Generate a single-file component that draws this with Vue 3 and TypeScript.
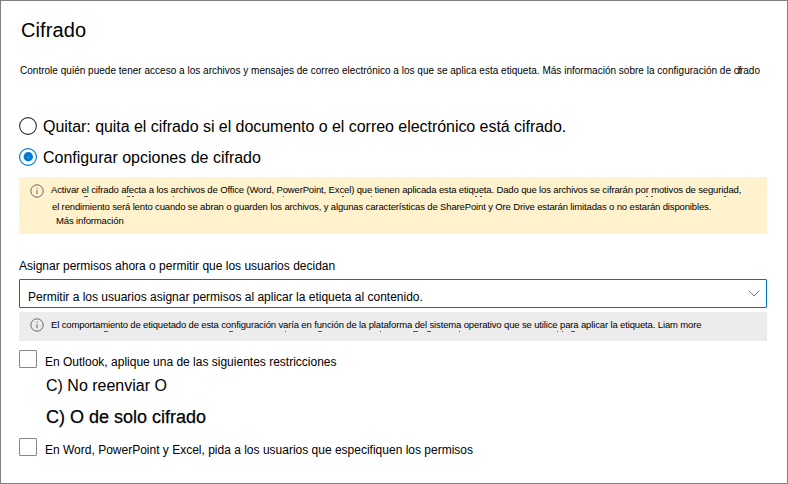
<script setup lang="ts">
import { ref } from 'vue'

const mode = ref<'remove' | 'configure'>('configure')
const outlook = ref(false)
const office = ref(false)
const modes: { id: 'remove' | 'configure'; label: string }[] = [
  { id: 'remove', label: 'Quitar: quita el cifrado si el documento o el correo electrónico está cifrado.' },
  { id: 'configure', label: 'Configurar opciones de cifrado' },
]
</script>

<template>
  <main class="panel">
    <h1 class="title">Cifrado</h1>
    <p class="intro">Controle quién puede tener acceso a los archivos y mensajes de correo electrónico a los que se aplica esta etiqueta. Más información sobre la configuración de <span class="tight">cif</span>rado</p>

    <div class="modes">
      <div v-for="m in modes" :key="m.id" class="mode" :class="m.id" @click="mode = m.id">
        <svg class="radio" viewBox="0 0 18 18">
          <circle cx="9" cy="9" r="8.4" fill="#fff" :stroke="mode === m.id ? '#0078d4' : '#333'" stroke-width="1.1" />
          <template v-if="mode === m.id">
            <circle cx="9.3" cy="8.8" r="4.7" fill="#0078d4" />
            <circle cx="9.5" cy="9.5" r=".7" fill="#8dc3ec" />
          </template>
        </svg>
        <span class="mode-label">{{ m.label }}</span>
      </div>
    </div>

    <section class="notice warning">
      <svg class="info" viewBox="0 0 14 14">
        <circle cx="7" cy="7" r="6.2" />
        <path d="M7 6v4.2M7 3.7v1.1" />
      </svg>
      <div class="lines">
        <p class="line w1">Activar el cifrado afecta a los archivos de Office (Word, PowerPoint, Excel) que tienen aplicada esta etiqueta. Dado que los archivos se cifrarán por motivos de seguridad,</p>
        <svg class="specks" viewBox="0 0 700 2">
          <path d="M33 .5h4M76 .5h3M81 .5h2M122 .5h1M232 .5h1M291 .5h2M320 .5h1M424 .5h2M429 .5h2M595 .5h2M600 .5h2M673 .5h2" />
        </svg>
        <p class="line w2">el rendimiento será lento cuando se abran o guarden los archivos, y algunas características de SharePoint y Ore Drive estarán limitadas o no estarán disponibles.</p>
        <p class="line w3">Más información</p>
      </div>
    </section>

    <p class="line label">Asignar permisos ahora o permitir que los usuarios decidan</p>
    <div class="select">
      <span class="line value">Permitir a los usuarios asignar permisos al aplicar la etiqueta al contenido.</span>
      <svg class="chevron" viewBox="0 0 12 7"><path d="M.7.7 6 6 11.3.7" /></svg>
    </div>

    <section class="notice neutral">
      <svg class="info" viewBox="0 0 14 14">
        <circle cx="7" cy="7" r="6.2" />
        <path d="M7 6v4.2M7 3.7v1.1" />
      </svg>
      <div class="lines">
        <p class="line n1">El comportamiento de etiquetado de esta configuración varía en función de la plataforma del sistema operativo que se utilice para aplicar la etiqueta. Liam more</p>
        <svg class="specks" viewBox="0 0 700 2">
          <path d="M53 .5h4M178 .5h4M234 .5h1M267 .5h4M329 .5h1M362 .5h5M376 .5h4M408 .5h1M506 .5h1M511 .5h1M520 .5h4" />
        </svg>
      </div>
    </section>

    <div class="check first" @click="outlook = !outlook">
      <span class="box" :class="{ on: outlook }"></span>
      <span class="line c1">En Outlook, aplique una de las siguientes restricciones</span>
    </div>
    <p class="option">C) No reenviar O</p>
    <p class="option large">C) O de solo cifrado</p>
    <div class="check" @click="office = !office">
      <span class="box" :class="{ on: office }"></span>
      <span class="line c2">En Word, PowerPoint y Excel, pida a los usuarios que especifiquen los permisos</span>
    </div>
  </main>
</template>

<style>
body {
  margin: 0;
}
</style>

<style scoped>
.panel {
  box-sizing: border-box;
  width: 788px;
  height: 484px;
  padding: 17px 20px 0 18px;
  border: 1px solid #7f7f7f;
  background: #fff;
  color: #000;
  font-family: "Liberation Sans", Arial, sans-serif;
  overflow: hidden;
}
p, h1 {
  margin: 0;
}
.title {
  padding-left: 2px;
  font-size: 20px;
  line-height: 24px;
  font-weight: 400;
  letter-spacing: 0.1px;
}
.intro {
  width: 740px;
  margin: 21px 0 0 1px;
  font-size: 10px;
  line-height: 16px;
  white-space: nowrap;
  letter-spacing: 0.018px;
}
.tight {
  letter-spacing: -1.3px;
}
.modes {
  display: flex;
  flex-direction: column;
  gap: 7px;
  margin-top: 35px;
}
.mode {
  display: flex;
  align-items: center;
  gap: 6px;
  height: 24px;
  font-size: 16px;
  line-height: 24px;
  white-space: nowrap;
}
.mode-label {
  padding-top: 2px;
}
.remove .mode-label {
  letter-spacing: -0.042px;
}
.radio {
  width: 18px;
  height: 18px;
}
.notice {
  box-sizing: border-box;
  display: flex;
  width: 748px;
  padding-left: 11px;
  gap: 7px;
  font-size: 9.5px;
  letter-spacing: -0.14px;
}
.warning {
  height: 57px;
  margin-top: 8px;
  padding-top: 6px;
  background: #fff2cc;
}
.neutral {
  height: 29px;
  margin-top: 4px;
  padding-top: 6px;
  background: #ececec;
}
.info {
  flex: none;
  width: 14px;
  height: 14px;
  fill: none;
  stroke: #666;
  stroke-width: 1;
}
.warning .info {
  margin-top: 1px;
}
.line {
  display: block;
  white-space: nowrap;
}
.lines {
  display: flex;
  flex-direction: column;
}
.specks {
  display: block;
  width: 700px;
  height: 2px;
  fill: none;
  stroke: #555;
  stroke-width: 1;
}
.w1 { line-height: 13px; }
.w2 { margin: 2px 0 0 1px; line-height: 14px; }
.w3 { margin-left: 5px; line-height: 14px; }
.n1 { line-height: 13px; }
.label {
  margin-top: 24px;
  font-size: 12px;
  line-height: 16px;
}
.select {
  box-sizing: border-box;
  display: flex;
  align-items: center;
  justify-content: space-between;
  width: 748px;
  height: 29px;
  margin-top: 5px;
  padding: 0 6px 0 8px;
  border: 1px solid #0070c0;
  border-radius: 1px;
}
.value {
  padding-top: 7px;
  font-size: 12px;
  line-height: 16px;
}
.chevron {
  width: 12px;
  height: 7px;
  fill: none;
  stroke: #777;
  stroke-width: 1;
}
.check {
  display: flex;
  gap: 8px;
  height: 24px;
}
.check.first {
  margin-top: 9px;
}
.check .line {
  padding-top: 4px;
  font-size: 12px;
  line-height: 16px;
}
.box {
  box-sizing: border-box;
  width: 18px;
  height: 18px;
  border: 1px solid #8a8886;
  border-radius: 1px;
}
.box.on {
  background: #0078d4;
}
.option {
  padding-left: 27px;
  font-size: 16px;
  line-height: 24px;
}
.option.large {
  margin: 7px 0 9px;
  font-size: 18px;
  -webkit-text-stroke: 0.25px #000;
}
</style>
